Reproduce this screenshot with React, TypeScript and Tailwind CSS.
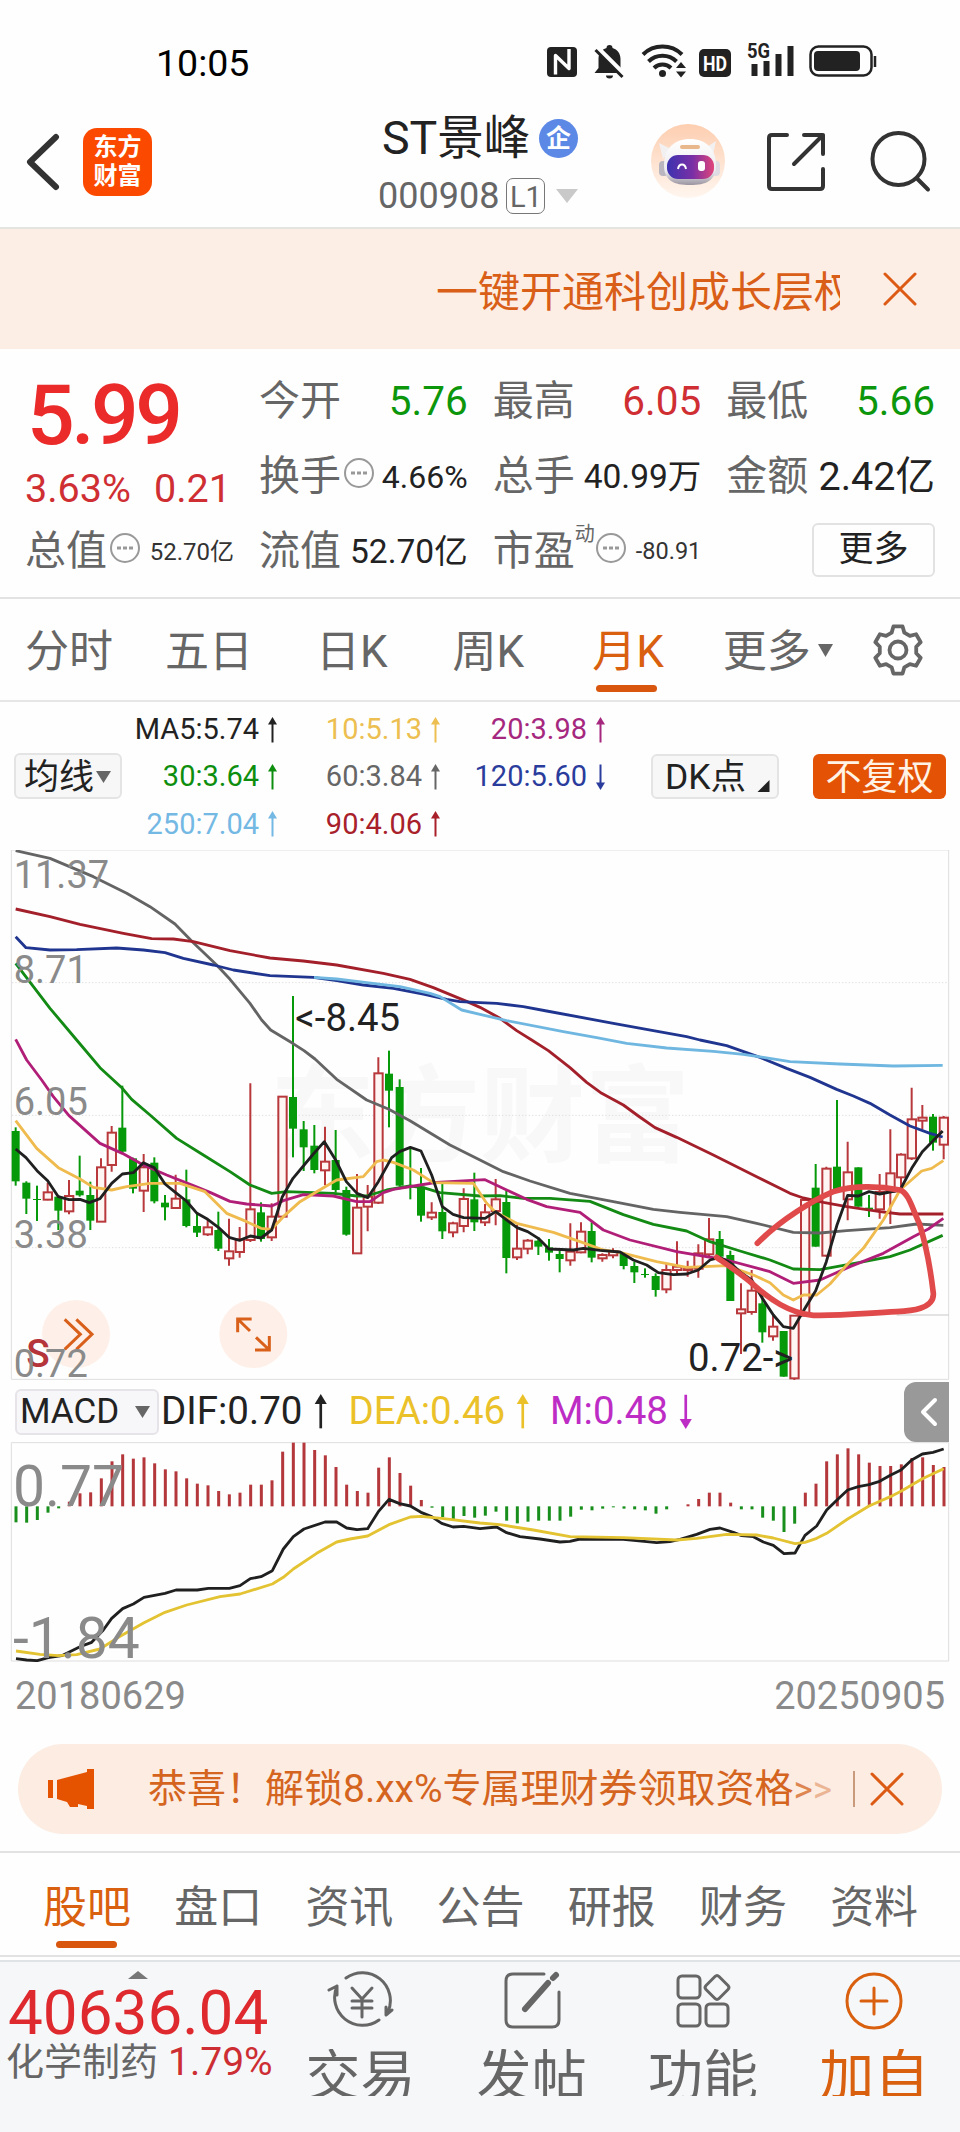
import type { ReactNode } from 'react'
import clsx from 'clsx'

type Point = [number, number]
// high, top, bottom, low, direction
type Candle = [number, number, number, number, 'r' | 'g']

const CANDLES: Candle[] = [
  [262, 273, 424, 437, 'g'], [424, 428, 476, 522, 'g'], [437, 477, 480, 543, 'g'], [428, 457, 479, 481, 'r'],
  [465, 470, 512, 570, 'g'], [420, 468, 514, 523, 'r'], [347, 452, 466, 470, 'g'], [425, 465, 542, 570, 'g'],
  [355, 382, 545, 545, 'r'], [258, 278, 375, 395, 'r'], [137, 263, 335, 340, 'g'], [353, 355, 446, 460, 'g'],
  [342, 382, 452, 516, 'r'], [352, 368, 484, 490, 'g'], [465, 488, 502, 541, 'g'], [404, 476, 504, 506, 'r'],
  [389, 478, 558, 562, 'g'], [522, 558, 578, 591, 'g'], [538, 562, 583, 588, 'r'], [515, 570, 626, 633, 'g'],
  [536, 634, 655, 677, 'r'], [561, 598, 636, 653, 'r'], [130, 508, 600, 606, 'r'], [487, 517, 597, 605, 'g'],
  [490, 530, 592, 603, 'r'], [170, 170, 530, 530, 'r'], [-132, 171, 266, 352, 'g'], [243, 268, 322, 393, 'g'],
  [255, 317, 390, 400, 'g'], [260, 365, 391, 436, 'r'], [270, 360, 450, 458, 'g'], [440, 450, 584, 587, 'g'],
  [402, 503, 640, 640, 'r'], [435, 470, 500, 574, 'r'], [52, 100, 488, 492, 'r'], [32, 101, 152, 262, 'g'],
  [118, 141, 437, 440, 'g'], [322, 436, 438, 478, 'g'], [384, 440, 527, 545, 'g'], [487, 518, 532, 540, 'r'],
  [432, 516, 574, 597, 'g'], [545, 550, 577, 592, 'r'], [445, 477, 558, 577, 'r'], [398, 478, 547, 573, 'g'],
  [492, 517, 547, 558, 'r'], [417, 478, 513, 556, 'r'], [447, 486, 654, 700, 'g'], [555, 626, 652, 660, 'r'],
  [597, 602, 626, 643, 'r'], [592, 602, 620, 645, 'g'], [597, 622, 638, 662, 'g'], [633, 642, 657, 697, 'g'],
  [550, 635, 661, 677, 'r'], [547, 575, 637, 640, 'r'], [547, 573, 653, 667, 'g'], [640, 645, 655, 665, 'r'],
  [625, 634, 646, 655, 'r'], [637, 642, 678, 688, 'g'], [665, 678, 697, 729, 'g'], [685, 702, 705, 713, 'g'],
  [700, 708, 750, 770, 'g'], [672, 690, 748, 760, 'r'], [604, 680, 690, 702, 'r'], [662, 684, 690, 710, 'r'],
  [613, 640, 686, 713, 'r'], [534, 598, 643, 650, 'r'], [573, 597, 650, 655, 'g'], [632, 645, 783, 783, 'g'],
  [730, 808, 820, 942, 'r'], [690, 752, 816, 824, 'r'], [760, 790, 877, 908, 'g'], [826, 860, 889, 902, 'r'],
  [873, 873, 1010, 1010, 'g'], [827, 827, 1015, 1020, 'r'], [478, 480, 827, 827, 'r'], [372, 443, 620, 620, 'g'],
  [380, 386, 647, 650, 'r'], [180, 380, 447, 450, 'g'], [305, 397, 478, 541, 'r'], [382, 382, 500, 500, 'g'],
  [465, 503, 508, 531, 'g'], [402, 456, 508, 536, 'r'], [268, 400, 455, 552, 'r'], [340, 344, 412, 440, 'r'],
  [143, 238, 355, 360, 'r'], [195, 233, 242, 268, 'r'], [222, 230, 308, 332, 'g'], [228, 233, 314, 358, 'r'],
]

const MA_LINES: { color: string; points: Point[] }[] = [
  {
    color: '#646464',
    points: [[47, -568], [150, -545], [280, -490], [380, -440], [450, -400], [525, -348], [580, -292], [650, -225], [690, -182], [750, -110], [785, -60], [812, -30], [878, 10], [912, 32], [945, 57], [1010, 118], [1100, 180], [1165, 207], [1230, 242], [1350, 315], [1440, 360], [1510, 395], [1590, 423], [1710, 460], [1840, 485], [1960, 508], [2040, 517], [2180, 530], [2270, 550], [2380, 577], [2460, 579], [2540, 572], [2670, 563], [2750, 552], [2830, 556]],
  },
  {
    color: '#a3202b',
    points: [[47, -393], [150, -370], [240, -347], [370, -320], [455, -304], [520, -303], [580, -295], [690, -268], [810, -246], [910, -237], [1010, -225], [1150, -200], [1230, -182], [1300, -157], [1400, -116], [1440, -98], [1500, -65], [1550, -28], [1595, 0], [1645, 32], [1710, 83], [1760, 127], [1805, 160], [1870, 195], [1915, 228], [1965, 263], [2030, 292], [2140, 345], [2270, 410], [2370, 460], [2410, 474], [2470, 487], [2540, 500], [2640, 515], [2700, 522], [2830, 522]],
  },
  {
    color: '#20358f',
    points: [[47, -310], [78, -277], [150, -270], [230, -271], [350, -276], [430, -270], [495, -262], [550, -245], [640, -225], [700, -210], [810, -193], [940, -188], [1010, -178], [1090, -165], [1180, -155], [1270, -138], [1340, -122], [1380, -115], [1440, -112], [1490, -110], [1570, -100], [1640, -87], [1840, -50], [1960, -28], [2060, -10], [2100, 0], [2180, 17], [2280, 52], [2360, 85], [2430, 112], [2510, 148], [2560, 168], [2610, 190], [2670, 225], [2730, 258], [2790, 280], [2828, 291]],
  },
  {
    color: '#6fb7e0',
    points: [[942, -188], [1010, -183], [1100, -172], [1200, -160], [1290, -140], [1320, -130], [1385, -90], [1440, -77], [1520, -58], [1690, -25], [1790, -7], [1880, 10], [2000, 24], [2140, 34], [2230, 43], [2290, 52], [2370, 65], [2520, 72], [2680, 78], [2828, 76]],
  },
  {
    color: '#138a13',
    points: [[47, -230], [150, -95], [230, 0], [300, 83], [367, 145], [395, 178], [450, 225], [530, 295], [610, 345], [690, 395], [750, 435], [815, 460], [860, 455], [940, 458], [1000, 460], [1070, 468], [1100, 468], [1160, 450], [1230, 438], [1270, 443], [1320, 458], [1440, 468], [1500, 467], [1570, 475], [1650, 475], [1770, 484], [1870, 524], [1960, 553], [2060, 573], [2130, 605], [2220, 633], [2310, 660], [2380, 687], [2460, 689], [2510, 680], [2580, 667], [2670, 650], [2730, 630], [2828, 586]],
  },
  {
    color: '#b01e78',
    points: [[47, -2], [80, 60], [125, 120], [160, 170], [207, 227], [300, 310], [367, 340], [430, 375], [500, 405], [580, 437], [630, 457], [690, 484], [740, 492], [815, 498], [850, 482], [910, 464], [1000, 468], [1070, 485], [1110, 485], [1150, 458], [1180, 448], [1260, 435], [1310, 427], [1455, 419], [1520, 450], [1580, 478], [1640, 500], [1740, 517], [1810, 570], [1890, 600], [2030, 635], [2180, 660], [2310, 695], [2380, 730], [2460, 720], [2550, 680], [2650, 640], [2740, 590], [2785, 567], [2830, 535]],
  },
  {
    color: '#efbb4e',
    points: [[47, 242], [110, 325], [175, 383], [240, 417], [280, 442], [335, 450], [380, 440], [450, 430], [540, 430], [615, 455], [680, 520], [740, 545], [783, 565], [815, 568], [850, 530], [900, 485], [950, 455], [1010, 420], [1090, 410], [1130, 365], [1150, 360], [1180, 367], [1240, 390], [1300, 428], [1420, 430], [1440, 460], [1460, 490], [1485, 515], [1550, 550], [1660, 577], [1740, 605], [1810, 630], [1860, 637], [1970, 665], [2060, 682], [2180, 677], [2260, 705], [2310, 728], [2350, 765], [2380, 780], [2410, 765], [2450, 765], [2490, 732], [2540, 675], [2590, 625], [2650, 540], [2700, 450], [2765, 393], [2795, 385], [2830, 362]],
  },
  {
    color: '#202020',
    points: [[47, 327], [78, 353], [111, 392], [143, 422], [175, 470], [207, 479], [240, 478], [268, 488], [300, 476], [335, 430], [367, 402], [400, 398], [430, 368], [463, 383], [495, 432], [527, 458], [559, 483], [591, 520], [623, 538], [655, 562], [687, 592], [719, 601], [751, 588], [783, 594], [815, 570], [847, 470], [879, 415], [940, 342], [973, 305], [1007, 360], [1039, 425], [1071, 460], [1103, 473], [1135, 425], [1175, 353], [1199, 335], [1231, 322], [1263, 333], [1295, 405], [1327, 500], [1359, 523], [1391, 533], [1455, 535], [1487, 515], [1551, 563], [1583, 575], [1615, 595], [1647, 627], [1720, 630], [1750, 625], [1800, 631], [1860, 636], [1900, 660], [1940, 675], [1975, 698], [2020, 704], [2060, 702], [2095, 690], [2130, 660], [2159, 652], [2191, 668], [2223, 698], [2255, 720], [2287, 775], [2320, 825], [2350, 860], [2380, 865], [2415, 805], [2447, 752], [2479, 665], [2511, 555], [2543, 466], [2575, 468], [2607, 455], [2639, 462], [2700, 450], [2735, 385], [2767, 335], [2828, 273]],
  },
]

const MACD_ZERO = 409
const MACD_BARS = [
  457, 458, 450, 428, 415, 395, 370, 367, 325, 274, 253, 266, 262, 280, 298, 304, 325, 341, 346, 363, 373, 368,
  344, 344, 331, 245, 218, 218, 240, 256, 291, 344, 363, 368, 293, 262, 309, 347, 390, 413, 441, 448, 438, 443,
  437, 425, 452, 460, 455, 452, 452, 452, 440, 419, 421, 416, 412, 416, 418, 421, 431, 418, 409, 403, 387, 368,
  368, 398, 418, 418, 443, 452, 486, 461, 368, 341, 274, 253, 235, 253, 278, 288, 288, 283, 264, 262, 285, 291,
]

const DIF: Point[] = [[48, 866], [80, 870], [112, 872], [145, 863], [185, 857], [240, 830], [275, 817], [310, 780], [335, 745], [368, 716], [400, 702], [432, 682], [495, 670], [528, 660], [592, 660], [625, 655], [688, 655], [720, 647], [751, 626], [783, 620], [817, 602], [850, 537], [880, 500], [912, 477], [975, 456], [1010, 456], [1040, 474], [1071, 479], [1103, 476], [1135, 425], [1167, 388], [1199, 401], [1231, 408], [1263, 427], [1295, 440], [1325, 460], [1359, 471], [1391, 469], [1440, 476], [1490, 471], [1520, 488], [1560, 500], [1620, 507], [1680, 516], [1710, 514], [1740, 507], [1780, 508], [1870, 508], [1940, 515], [1970, 518], [2010, 515], [2040, 508], [2090, 493], [2130, 478], [2160, 474], [2200, 487], [2225, 497], [2260, 500], [2290, 516], [2320, 526], [2352, 551], [2385, 549], [2415, 496], [2450, 468], [2480, 420], [2511, 390], [2543, 360], [2575, 350], [2607, 344], [2639, 334], [2671, 316], [2703, 300], [2735, 270], [2767, 252], [2799, 247], [2831, 237]]

const DEA: Point[] = [[48, 843], [120, 853], [175, 857], [230, 854], [300, 837], [350, 805], [432, 758], [495, 727], [560, 705], [660, 680], [720, 672], [817, 642], [850, 622], [880, 597], [950, 550], [1010, 516], [1050, 507], [1103, 498], [1167, 464], [1231, 441], [1263, 439], [1325, 445], [1440, 459], [1500, 464], [1600, 480], [1710, 500], [1870, 503], [2030, 510], [2090, 505], [2180, 493], [2270, 495], [2320, 504], [2385, 521], [2415, 517], [2450, 505], [2480, 490], [2543, 447], [2607, 408], [2671, 380], [2703, 364], [2767, 326], [2831, 296]]

const toPoints = (points: Point[]) => points.map((p) => p.join(',')).join(' ')

function StatusBar() {
  return (
    <div className="flex h-[97px] items-start pt-[44px] pl-[156px]">
      <span className="w-[391px] text-[37.5px] leading-[38px] text-black">10:05</span>
      <svg width="30" height="36" viewBox="547 44 30 36">
        <rect x="547" y="47" width="30" height="30" rx="4" fill="#222" />
        <path d="M555.500 72V55.500l13.500 13V51" fill="none" stroke="#fff" strokeWidth="3.400" strokeLinejoin="round" />
        <path d="M555.500 72v2.500M569 51v-2" stroke="#fff" strokeWidth="3.400" />
      </svg>
      <svg className="ml-4" width="33" height="36" viewBox="593 44 33 36">
        <path d="M609.500 45a3 3 0 0 1 3 3c5 1.500 8 5.500 8 11v9l4 5h-30l4-5v-9c0-5.500 3-9.500 8-11a3 3 0 0 1 3-3zM606 75.500h7a3.500 3 0 0 1-7 0z" fill="#222" />
        <path d="M597 48l28 28" stroke="#fff" strokeWidth="6" />
        <path d="M595.500 50l27 27" stroke="#222" strokeWidth="3" />
      </svg>
      <svg className="ml-[15px]" width="47" height="36" viewBox="641 44 47 36">
        <g fill="none" stroke="#222" strokeWidth="4">
          <path d="M643 54.500a28 28 0 0 1 39 0" />
          <path d="M648.500 61.500a20 20 0 0 1 28 0" />
          <path d="M654 68a12 12 0 0 1 17 0" />
        </g>
        <circle cx="662.500" cy="73.500" r="3.500" fill="#222" />
        <path d="M676 68l5-6 5 6zM676 71.500h10l-5 6z" fill="#222" />
      </svg>
      <svg className="ml-[11px]" width="32" height="36" viewBox="699 44 32 36">
        <rect x="699" y="49" width="32" height="28" rx="5" fill="#222" />
        <text x="715" y="70.500" textAnchor="middle" fontSize="21" fontWeight="700" fill="#fff" textLength="24" lengthAdjust="spacingAndGlyphs">HD</text>
      </svg>
      <svg className="ml-4 overflow-visible" width="48" height="36" viewBox="747 44 48 36">
        <text x="747" y="58" fontSize="20" fontWeight="700" fill="#222" textLength="23" lengthAdjust="spacingAndGlyphs">5G</text>
        <path d="M754.500 64v12M766.500 61v15M778.500 54v22M790.500 46v30" stroke="#222" strokeWidth="6" />
      </svg>
      <svg className="ml-3.5" width="68" height="36" viewBox="809 44 68 36">
        <rect x="810.500" y="46.500" width="61" height="29" rx="8" fill="none" stroke="#222" strokeWidth="2.500" />
        <rect x="814" y="51" width="46" height="20" rx="4" fill="#222" />
        <path d="M875 56v11" stroke="#222" strokeWidth="2.500" />
      </svg>
    </div>
  )
}

function Robot() {
  return (
    <svg width="76" height="76" viewBox="0 0 76 76">
      <defs>
        <linearGradient id="halo" x1="0" y1="0" x2="0" y2="1">
          <stop offset="0" stopColor="#fdceb0" />
          <stop offset="1" stopColor="#fff6ef" />
        </linearGradient>
        <linearGradient id="visor">
          <stop offset="0" stopColor="#3c32b0" />
          <stop offset=".55" stopColor="#7a2fa5" />
          <stop offset="1" stopColor="#e0457a" />
        </linearGradient>
        <linearGradient id="helmet" x1="0" y1="0" x2="0" y2="1">
          <stop offset="0" stopColor="#fff" />
          <stop offset=".7" stopColor="#ececf0" />
          <stop offset="1" stopColor="#9a94a0" />
        </linearGradient>
      </defs>
      <circle cx="38" cy="38" r="37" fill="url(#halo)" />
      <path d="M9 20l12 6-8 10zM66 18l-12 8 8 10z" fill="#f3f0f2" />
      <rect x="9" y="38" width="9" height="15" rx="4" fill="#b9b6c0" />
      <rect x="61" y="38" width="9" height="15" rx="4" fill="#dedbe2" />
      <path d="M14 42c0-16 10-26 26-26s26 10 26 26-10 20-26 20-26-4-26-20z" fill="url(#helmet)" />
      <rect x="30" y="22" width="20" height="4" rx="2" fill="#e9b78c" />
      <rect x="17" y="32" width="47" height="24" rx="11" fill="url(#visor)" />
      <path d="M28 46c1-6 7-6 8 0" fill="none" stroke="#fff" strokeWidth="2" />
      <rect x="48" y="38" width="7" height="10" rx="3" fill="#fff" />
    </svg>
  )
}

function Header() {
  return (
    <div className="flex h-[132px] items-start border-b-2 border-[#e4e4e1] pl-[26px]">
      <svg className="mt-9" width="34" height="58" viewBox="0 0 34 58" fill="none" stroke="#333" strokeWidth="6" strokeLinecap="round" strokeLinejoin="round">
        <path d="M30 4L4 29l26 25" />
      </svg>
      <div className="mt-[31px] ml-[23px] h-[68px] w-[69px] rounded-[14px] bg-[#fb4a00] pt-[5px] text-center text-[24px] leading-[29px] font-bold text-white">
        <div>东方</div>
        <div>财富</div>
      </div>
      <div className="ml-[226px] w-[210px] pt-[16px]">
        <div className="flex items-center pl-[4px]">
          <span className="w-[157px] text-[46.5px] leading-[50px] whitespace-nowrap text-[#222]">ST景峰</span>
          <span className="flex h-[39px] w-[39px] items-center justify-center rounded-full bg-[#5c88e6] text-[25px] leading-none font-bold text-white">企</span>
        </div>
        <div className="mt-[2px] flex h-[62px] items-center">
          <span className="text-[36px] leading-none text-[#666]">000908</span>
          <span className="ml-[7px] flex h-[36px] w-[39px] items-center justify-center rounded-[7px] border-[1.500px] border-[#777] pt-0.5 text-[29px] leading-none text-[#666]">L1</span>
          <svg className="ml-[11px]" width="22" height="14" viewBox="0 0 22 14"><path d="M0 0h22L11 14z" fill="#c9c9c9" /></svg>
        </div>
      </div>
      <div className="mt-[26px] ml-[62px]">
        <Robot />
      </div>
      <svg className="mt-[34px] ml-[38px]" width="64" height="62" viewBox="765 131 64 62" fill="none" stroke="#333" strokeWidth="4" strokeLinecap="round" strokeLinejoin="round">
        <path d="M788 135h-15q-3 0-3 3v48q0 3 3 3h48q3 0 3-3v-17M805 135h19v19M824 135l-29 29" />
      </svg>
      <svg className="mt-[32px] ml-[41px]" width="64" height="64" viewBox="869 128.500 64 64" fill="none" stroke="#333" strokeWidth="4" strokeLinecap="round">
        <circle cx="898.500" cy="158.500" r="26" />
        <path d="M917 178l11 11" />
      </svg>
    </div>
  )
}

function CloseIcon() {
  return (
    <svg width="34" height="34" viewBox="0 0 34 34" stroke="#dc5a14" strokeWidth="3" strokeLinecap="round">
      <path d="M2 2l30 30M32 2L2 32" />
    </svg>
  )
}

function Banner() {
  return (
    <div className="flex h-[120px] items-center bg-[#fdeee5] pl-[436px]">
      <div className="w-[404px] overflow-hidden pt-[7px] text-[42px] leading-[50px] whitespace-nowrap text-[#d95f18]">一键开通科创成长层权</div>
      <div className="ml-[43px]">
        <CloseIcon />
      </div>
    </div>
  )
}

function Dots() {
  return (
    <svg className="shrink-0" width="32" height="32" viewBox="0 0 32 32">
      <circle cx="16" cy="16" r="14" fill="none" stroke="#999" strokeWidth="2" />
      <path d="M8 14.500h4v3H8zM14 14.500h4v3h-4zM20 14.500h4v3h-4z" fill="#999" />
    </svg>
  )
}

interface CellProps {
  label: string
  value: string
  valueClass: string
  dots?: boolean
  sup?: string
}

function Cell({ label, value, valueClass, dots, sup }: CellProps) {
  return (
    <div className="flex h-[75px] items-center justify-between pt-[4px] leading-none whitespace-nowrap">
      <div className="flex items-center text-[41px] text-[#666]">
        {label}
        {sup && <span className="mb-9 text-[20px]">{sup}</span>}
        {dots && <span className={clsx('mb-2', !sup && 'ml-[2px]')}><Dots /></span>}
      </div>
      <span className={valueClass}>{value}</span>
    </div>
  )
}

function Quote() {
  return (
    <div className="flex h-[250px] gap-[25px] border-b-2 border-[#e3e3e3] pt-[13px] pr-[25px] pl-[25px]">
      <div className="w-[209px]">
        <div className="flex h-[104px] items-center pt-[3px] text-[84px] leading-none font-medium tracking-[-3.500px] text-[#eb2a2a]">
          <span className="pl-[2px]">5.99</span>
        </div>
        <div className="flex h-[46px] items-center justify-between pr-[3px] text-[39.5px] leading-none text-[#cf2e33]">
          <span>3.63%</span>
          <span>0.21</span>
        </div>
        <Cell label="总值" value="52.70亿" valueClass="text-[24px] text-[#333]" dots />
      </div>
      <div className="grid flex-1 grid-cols-3 content-start gap-x-[25px]">
        <Cell label="今开" value="5.76" valueClass="text-[40.5px] text-[#0c960c]" />
        <Cell label="最高" value="6.05" valueClass="text-[40.5px] text-[#cf2e33]" />
        <Cell label="最低" value="5.66" valueClass="text-[40.5px] text-[#0c960c]" />
        <Cell label="换手" value="4.66%" valueClass="text-[32px] text-[#222]" dots />
        <Cell label="总手" value="40.99万" valueClass="text-[33.5px] text-[#222]" />
        <Cell label="金额" value="2.42亿" valueClass="text-[39.5px] text-[#222]" />
        <Cell label="流值" value="52.70亿" valueClass="text-[33.5px] text-[#222]" />
        <Cell label="市盈" value="-80.91" valueClass="text-[23.5px] text-[#333]" dots sup="动" />
        <div className="flex h-[75px] items-center justify-end">
          <button className="h-[54px] w-[123px] rounded-[6px] border-2 border-[#e2e2e2] text-[35px] leading-none text-[#222]">更多</button>
        </div>
      </div>
    </div>
  )
}

function Gear() {
  const points: string[] = []
  for (let k = 0; k < 6; k++) {
    const base = -90 + k * 60
    const steps: Point[] = [[-20, 18.5], [-11, 24], [11, 24], [20, 18.5]]
    steps.forEach(([deg, r]) => {
      const a = ((base + deg) * Math.PI) / 180
      points.push(`${27 + r * Math.cos(a)},${27 + r * Math.sin(a)}`)
    })
  }
  return (
    <svg width="54" height="54" viewBox="0 0 54 54" fill="none" stroke="#666" strokeWidth="3.800" strokeLinejoin="round">
      <polygon points={points.join(' ')} />
      <circle cx="27" cy="27" r="8.500" />
    </svg>
  )
}

function PeriodTabs() {
  return (
    <div className="flex h-[103px] items-center border-b-2 border-[#e6e6e6] pt-[5px] pl-[25px] text-[44px] leading-none whitespace-nowrap text-[#666]">
      <span>分时</span>
      <span className="ml-[52px]">五日</span>
      <span className="ml-[63px]">日K</span>
      <span className="ml-[65px]">周K</span>
      <span className="relative ml-[68px] text-[#d9600f]">
        月K
        <i className="absolute -bottom-[18px] left-[4px] h-[7px] w-[61px] rounded-full bg-[#d9560f]" />
      </span>
      <span className="ml-[59px]">更多</span>
      <svg className="mb-1 ml-[7px]" width="15" height="13" viewBox="0 0 15 13"><path d="M0 0h15L7.500 13z" fill="#666" /></svg>
      <span className="mb-1 ml-[38px]"><Gear /></span>
    </div>
  )
}

function Arrow({ down, size = 26 }: { down?: boolean; size?: number }) {
  return (
    <svg className={down ? 'rotate-180' : ''} width={size / 2} height={size} viewBox="0 0 13 26">
      <path d="M6.500 25.500V5" stroke="currentColor" strokeWidth="2" />
      <path d="M2 7.500L6.500 0 11 7.500z" fill="currentColor" />
    </svg>
  )
}

function Ma({ text, className, down }: { text: string; className: string; down?: boolean }) {
  return (
    <div className={clsx('flex h-[47.300px] items-center justify-end gap-[7px]', className)}>
      <span>{text}</span>
      <Arrow down={down} />
    </div>
  )
}

function IndicatorBar() {
  return (
    <div className="flex h-[148px] items-start pl-[14px]">
      <div className="mt-[51px] flex h-[46px] w-[108px] items-center rounded-[6px] border-2 border-[#e4e4e4] bg-[#f7f7f7] pt-0.5 pl-[8px] text-[35px] leading-none text-[#222]">
        均线
        <svg className="ml-[2px]" width="15" height="12" viewBox="0 0 15 12"><path d="M0 0h15L7.500 12z" fill="#666" /></svg>
      </div>
      <div className="mt-[4px] grid w-[485px] grid-cols-[157px_163px_165px] text-[29px] leading-none">
        <Ma text="MA5:5.74" className="text-[#222]" />
        <Ma text="10:5.13" className="text-[#ecbf50]" />
        <Ma text="20:3.98" className="text-[#a5287e]" />
        <Ma text="30:3.64" className="text-[#0e8e0e]" />
        <Ma text="60:3.84" className="text-[#666]" />
        <Ma text="120:5.60" className="text-[#2a3c9c]" down />
        <Ma text="250:7.04" className="text-[#74b8e4]" />
        <Ma text="90:4.06" className="text-[#a8202a]" />
      </div>
      <div className="mt-[52px] ml-[44px] flex h-[45px] w-[128px] items-center rounded-[6px] border-2 border-[#e4e4e4] bg-[#f7f7f7] pt-0.5 pl-[12px] text-[35.5px] leading-none text-[#222]">
        DK点
        <svg className="mt-4 ml-[11px]" width="13" height="12" viewBox="0 0 12 12"><path d="M12 0v12H0z" fill="#222" /></svg>
      </div>
      <div className="mt-[52px] ml-[34px] flex h-[45px] w-[133px] items-center justify-center rounded-[6px] bg-[#e35205] pt-0.5 text-[36px] leading-none text-[#fff2e6]">不复权</div>
    </div>
  )
}

const PRICE_LABELS: [string, number][] = [['11.37', -455], ['8.71', -172], ['6.05', 224], ['3.38', 624], ['0.72', 1011]]

function KLineChart() {
  return (
    <svg className="block" width="960" height="531" viewBox="0 0 2880 1593">
      <g transform="translate(0 570)">
        <text x="810" y="340" fontSize="315" fontWeight="700" fill="#f8f8f8">东方财富</text>
        <g stroke="#dedede" strokeWidth="3" fill="none">
          <path d="M34-570H2846V1018H34z" />
          <path d="M36-172H2846M36 226H2846M36 623H2846" strokeDasharray="4 6" />
          <path d="M2690 825H2846" stroke="#c8c8c8" />
        </g>
        {CANDLES.map(([high, top, bottom, low, dir], i) => {
          const x = 47 + i * 32
          return dir === 'g' ? (
            <g key={i} fill="#06990a">
              <rect x={x - 3} y={high} width="6" height={low - high} />
              <rect x={x - 12} y={top} width="24" height={bottom - top} />
            </g>
          ) : (
            <g key={i} stroke="#b8383c" strokeWidth="6" fill="#fff6f4">
              <path d={`M${x} ${high}V${top}M${x} ${bottom}V${low}`} />
              <rect x={x - 12} y={top} width="25" height={bottom - top} />
            </g>
          )
        })}
        {MA_LINES.map((line) => (
          <polyline key={line.color} points={toPoints(line.points)} fill="none" stroke={line.color} strokeWidth="8.500" strokeLinejoin="round" />
        ))}
        <circle cx="228" cy="882" r="102" fill="#fef0e8" />
        <path d="M194 838l47 45-47 45M229 838l47 45-47 45" fill="none" stroke="#d9601a" strokeWidth="9" />
        <circle cx="760" cy="882" r="102" fill="#fef0e8" />
        <path d="M750 873l-37-36M713 877v-40h42M768 892l40 38M808 888v42h-43" fill="none" stroke="#d9601a" strokeWidth="9" />
        <text x="79" y="981" fontSize="116" fontWeight="500" fill="#b5353a">S</text>
        <g fontSize="114" fill="#8a8a8a">
          {PRICE_LABELS.map(([label, y]) => (
            <text key={label} x="41" y={y}>{label}</text>
          ))}
        </g>
        <g fontSize="115" fill="#222">
          <text x="886" y="-27">&lt;-8.45</text>
          <text x="2064" y="993">0.72-&gt;</text>
        </g>
        {/* freehand circle */}
        <path
          d="M2272 610C2340 540 2440 480 2500 455C2560 435 2640 438 2700 450C2728 460 2738 510 2758 550C2780 620 2793 700 2800 760C2803 808 2730 813 2690 815C2590 820 2520 828 2440 826C2370 820 2310 780 2250 725C2220 700 2190 680 2150 652"
          fill="none"
          stroke="#e04a4a"
          strokeWidth="17"
          strokeLinecap="round"
          strokeLinejoin="round"
        />
      </g>
    </svg>
  )
}

function MacdHeader() {
  return (
    <div className="flex h-[61px] items-center pl-[15px] text-[38.500px] leading-none text-[#222]">
      <div className="flex h-[46px] w-[144px] items-center rounded-[6px] border-2 border-[#e6e4e8] bg-[#f7f6f8] pl-[3px] text-[35px]">
        MACD
        <svg className="ml-[16px]" width="15" height="12" viewBox="0 0 15 12"><path d="M0 0h15L7.500 12z" fill="#666" /></svg>
      </div>
      <span className="ml-[2px] w-[151px]">DIF:0.70</span>
      <Arrow size={35} />
      <span className="ml-[19px] w-[165px] text-[#ebc12a]">DEA:0.46</span>
      <span className="text-[#ebc12a]"><Arrow size={35} /></span>
      <span className="ml-[19px] w-[127px] text-[#bd2cc4]">M:0.48</span>
      <span className="text-[#bd2cc4]"><Arrow size={35} down /></span>
      <div className="ml-auto mr-[11px] flex h-[60px] w-[45px] items-center justify-center rounded-l-[12px] bg-[#999] pl-1">
        <svg width="18" height="30" viewBox="0 0 18 30" fill="none" stroke="#fff" strokeWidth="4" strokeLinecap="round" strokeLinejoin="round">
          <path d="M15 3L3 15l12 12" />
        </svg>
      </div>
    </div>
  )
}

function MacdChart() {
  return (
    <svg className="block" width="960" height="220" viewBox="0 0 2880 660">
      <g transform="translate(0 -216)">
        <path d="M34 218H2846V873H34z" fill="none" stroke="#dedede" strokeWidth="3" />
        {MACD_BARS.map((y, i) => (
          <rect
            key={i}
            x={43.5 + i * 32}
            y={Math.min(y, MACD_ZERO)}
            width="9"
            height={Math.abs(y - MACD_ZERO)}
            fill={y < MACD_ZERO ? '#b3373b' : '#188f1c'}
          />
        ))}
        <polyline points={toPoints(DIF)} fill="none" stroke="#202020" strokeWidth="8.500" strokeLinejoin="round" />
        <polyline points={toPoints(DEA)} fill="none" stroke="#e3c331" strokeWidth="8.500" strokeLinejoin="round" />
        <g fontSize="171" fill="#8a8a8a">
          <text x="39" y="408">0.77</text>
          <text x="39" y="863">-1.84</text>
        </g>
      </g>
    </svg>
  )
}

function Promo() {
  return (
    <div className="mx-[18px] flex h-[90px] items-center rounded-full bg-[#fcece2] pl-[29px] whitespace-nowrap">
      <svg width="48" height="42" viewBox="0 0 48 42" fill="#e55300">
        <path d="M1 12h5v18H1zM10 12L40 4V1h7v40h-7v-3l-9-2v3h-8l-3-5-10-3z" />
      </svg>
      <div className="ml-[53px] w-[691px] text-[39px] leading-none text-[#d4641e]">
        恭喜！解锁8.xx%专属理财券领取资格<span className="text-[37px] opacity-75">&gt;</span><span className="text-[37px] opacity-40">&gt;</span>
      </div>
      <div className="ml-[14px] h-9 w-[2px] bg-[#c99a7c]" />
      <div className="ml-[15px]">
        <CloseIcon />
      </div>
    </div>
  )
}

const SECTIONS = ['股吧', '盘口', '资讯', '公告', '研报', '财务', '资料']

function SectionTabs() {
  return (
    <div className="mt-[17px] flex h-[106px] items-center gap-[43.200px] border-y-2 border-[#e2e2e2] pl-[43px] text-[44px] leading-none text-[#666]">
      {SECTIONS.map((name, i) => (
        <span key={name} className={clsx('relative mt-[7px]', i === 0 && 'text-[#d9600f]')}>
          {name}
          {i === 0 && <i className="absolute -bottom-[18px] left-[13px] h-[7px] w-[61px] rounded-full bg-[#d9560f]" />}
        </span>
      ))}
    </div>
  )
}

function NavItem({ label, className, children }: { label: string; className: string; children: ReactNode }) {
  return (
    <div className={clsx('flex flex-1 flex-col items-center', className)}>
      <svg className="mt-[6px]" width="68" height="66" viewBox="0 0 68 66" fill="none" stroke="currentColor" strokeWidth="3" strokeLinecap="round" strokeLinejoin="round">
        {children}
      </svg>
      <div className="mt-[15px] h-[47px] overflow-hidden text-[55px] leading-[55px]">{label}</div>
    </div>
  )
}

function BottomBar() {
  return (
    <div className="mt-[3px] flex h-[172px] border-t-2 border-[#e0e3e6] bg-[#f6f7f9]">
      <div className="w-[275px] whitespace-nowrap">
        <svg className="mt-[9px] ml-[128px] block" width="20" height="8" viewBox="0 0 20 8"><path d="M0 8h20L10 0z" fill="#777" /></svg>
        <div className="mt-[9px] pl-[8px] text-[62px] leading-[50px] text-[#de2a2e]">40636.04</div>
        <div className="mt-[2px] flex items-center pl-[6px] text-[38px] leading-[44px] text-[#666]">
          化学制药
          <span className="ml-[10px] text-[39px] text-[#cc2e33]">1.79%</span>
        </div>
      </div>
      <NavItem label="交易" className="text-[#666]">
        <path d="M19 10A28 28 0 0 1 61 44M52 52A28 28 0 0 1 10 18M2 22l8-4v9M59 39v8l6-5" />
        <path d="M25 20l10 11 10-11M35 31v18M25 33h20M25 40h20" />
      </NavItem>
      <NavItem label="发帖" className="text-[#666]">
        <path d="M46 6H15q-7 0-7 7v39q0 7 7 7h39q7 0 7-7V24" />
        <path d="M27 41l23-26M55 10l3-3" strokeWidth="6" />
      </NavItem>
      <NavItem label="功能" className="text-[#666]">
        <rect x="9" y="8" width="22" height="22" rx="4" />
        <rect x="9" y="36" width="22" height="22" rx="4" />
        <rect x="37" y="36" width="22" height="22" rx="4" />
        <path d="M46 8.500q2-2 4 0l9 9q2 2 0 4l-9 9q-2 2-4 0l-9-9q-2-2 0-4z" />
      </NavItem>
      <NavItem label="加自" className="text-[#d9600f]">
        <circle cx="34" cy="33" r="27" />
        <path d="M34 20v26M21 33h26" />
      </NavItem>
    </div>
  )
}

export default function App() {
  return (
    <div className="h-[2132px] w-[960px] overflow-hidden bg-[#fefefe] font-[Roboto,'Noto_Sans_CJK_SC',sans-serif]">
      <StatusBar />
      <Header />
      <Banner />
      <Quote />
      <PeriodTabs />
      <IndicatorBar />
      <KLineChart />
      <MacdHeader />
      <MacdChart />
      <div className="flex h-[82px] items-start justify-between pt-[15px] pr-[15px] pl-[15px] text-[38px] leading-[38px] text-[#8a8a8a]">
        <span>20180629</span>
        <span>20250905</span>
      </div>
      <Promo />
      <SectionTabs />
      <BottomBar />
    </div>
  )
}
